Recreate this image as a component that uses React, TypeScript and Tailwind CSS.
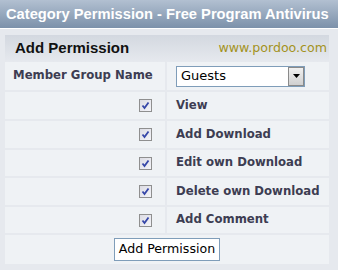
import React from "react";

const rows = [
  { label: "View", h: "h-[27px]" },
  { label: "Add Download", h: "h-[27px]" },
  { label: "Edit own Download", h: "h-[26px]" },
  { label: "Delete own Download", h: "h-[27px]" },
  { label: "Add Comment", h: "h-[26px]" },
];

function Check() {
  return (
    <span className="inline-flex h-[13px] w-[13px] items-center justify-center border border-[#8f8f8f] bg-gradient-to-br from-[#dcdce4] to-[#f4f4f8]">
      <svg width="9" height="9" viewBox="0 0 9 9">
        <path d="M1.5 4.5 L3.5 7 L7.5 1.5" fill="none" stroke="#3546a8" strokeWidth="1.8" />
      </svg>
    </span>
  );
}

export default function App() {
  return (
    <div className="h-[270px] w-[338px] overflow-hidden bg-[#e6e9ee]">
      <div className="flex h-[28px] items-center bg-gradient-to-b from-[#b2c0d1] to-[#7c91aa] pl-[6px] font-['Liberation_Sans',Arial,sans-serif] text-[14.7px] font-bold text-white">
        Category Permission - Free Program Antivirus
      </div>
      <div className="h-px bg-white" />
      <div className="flex flex-col gap-[2px] pl-[5px] pr-[9px] pt-[6px]">
        <div className="flex h-[27px] items-center justify-between bg-gradient-to-b from-[#d3d8e0] to-[#e6e9ee] pl-[10px] pr-[2px]">
          <span className="font-['Liberation_Sans',Arial,sans-serif] text-[15px] font-bold text-[#111]">Add Permission</span>
          <span className="font-['DejaVu_Sans',Verdana,sans-serif] text-[12.6px] text-[#a3921d]">www.pordoo.com</span>
        </div>
        <div className="-mt-[2px] flex h-[28px] gap-[2px] font-['DejaVu_Sans',Verdana,sans-serif] text-[11.7px] font-bold text-[#3d3d52]">
          <div className="flex w-[160px] items-center bg-[#eff2f5] pl-[8px]">Member Group Name</div>
          <div className="flex flex-1 items-center bg-[#eff2f5] pl-[9px]">
            <div className="flex h-[21px] w-[129px] items-center border border-[#7f9db9] bg-white">
              <span className="flex-1 pl-[4px] font-['DejaVu_Sans',Verdana,sans-serif] text-[13px] font-normal text-black">Guests</span>
              <span className="flex h-[19px] w-[16px] items-center justify-center border border-[#8a8a8a] bg-gradient-to-b from-[#f0f0f0] to-[#d0d0d0]">
                <svg width="7" height="4" viewBox="0 0 7 4"><path d="M0 0 H7 L3.5 4 Z" fill="#000" /></svg>
              </span>
            </div>
          </div>
        </div>
        {rows.map((r) => (
          <div key={r.label} className={`flex ${r.h} gap-[2px] font-['DejaVu_Sans',Verdana,sans-serif] text-[11.7px] font-bold text-[#3d3d52]`}>
            <div className="flex w-[160px] items-center justify-end bg-[#eff2f5] pr-[13px]">
              <Check />
            </div>
            <div className="flex flex-1 items-center bg-[#eff2f5] pl-[9px]">{r.label}</div>
          </div>
        ))}
        <div className="flex h-[29px] items-center justify-center bg-[#eff2f5]">
          <button className="h-[23px] border border-[#7f9db9] bg-white px-[4px] font-['DejaVu_Sans',Verdana,sans-serif] text-[12.6px] text-black">
            Add Permission
          </button>
        </div>
      </div>
    </div>
  );
}
